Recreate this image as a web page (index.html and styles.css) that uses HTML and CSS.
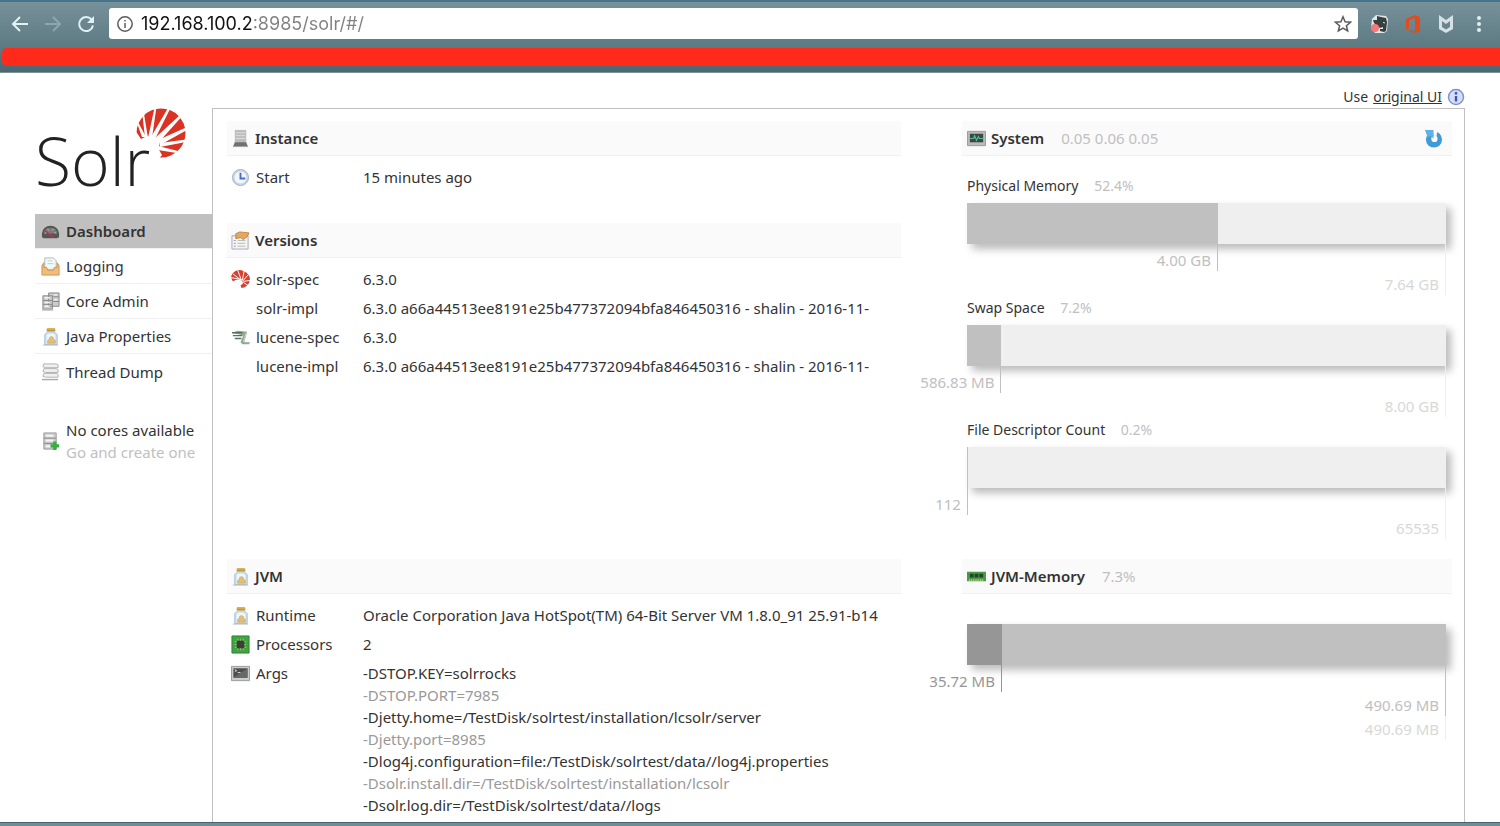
FILE: index.html
```html
<!DOCTYPE html>
<html lang="en">
<head>
  <meta charset="utf-8">
  <title>Solr Admin</title>
  <link rel="stylesheet" href="styles.css">
</head>
<body>
  <!-- Shared icons -->
  <svg class="defs" aria-hidden="true">
    <symbol id="icon-jar" viewBox="0 0 20 20">
      <path d="M4 8l3-3h7l3 3v10.500H4z" fill="#cfe3f0" stroke="#a3bccb"/>
      <path d="M6 9l2-2h5l2 2v8H6z" fill="#eef7fc"/>
      <rect x="6" y="1" width="9" height="4" rx="1" fill="#d9b25c"/>
      <path d="M6 3.500h9" stroke="#b98d35"/>
      <path d="M7 17v-3l2-1v-2l2-1 2 1v2l2 1v3z" fill="#e2c078" stroke="#c99c46" stroke-width=".6"/>
      <path d="M2 19h16" stroke="#bbb"/>
    </symbol>
    <symbol id="icon-sun" viewBox="0 0 50 50">
      <circle cx="25" cy="25" r="24.500" fill="#da3323"/>
      <path fill="#fff" d="M-1 22L5 31 10 28.500 16 28 20 30 23 33.500 23.500 37 22.500 41 26 47 22 52H-2z"/>
      <g fill="#fff">
        <path d="M1 15h1.500L10 29H6z"/>
        <path d="M6.500 7L8 6l4 24H9z"/>
        <path d="M18.500 0h1.800L16 30h-4z"/>
        <path d="M32 0l2 1-15 30-4-2z"/>
        <path d="M43 8l1.500 2L23 34l-4-4z"/>
        <path d="M49 20l1 2.500L24 37l-2-5z"/>
        <path d="M50 31.500v2.500L24 39v-4z"/>
        <path d="M42 43l-1.500 2L22 42v-4z"/>
      </g>
    </symbol>
  </svg>

  <header class="toolbar">
    <div class="nav-row">
      <button class="nav-btn" aria-label="Back">
        <svg viewBox="0 0 20 20"><path d="M18 10H3M10 3l-7 7 7 7"/></svg>
      </button>
      <button class="nav-btn disabled" aria-label="Forward" disabled>
        <svg viewBox="0 0 20 20"><path d="M2 10h15M10 3l7 7-7 7"/></svg>
      </button>
      <button class="nav-btn" aria-label="Reload">
        <svg viewBox="0 0 20 20"><path d="M15.500 5.500a7 7 0 1 0 1.500 6"/><path d="M18 2v7h-7z" class="solid"/></svg>
      </button>
      <div class="omnibox">
        <svg class="site-info" viewBox="0 0 18 18"><circle cx="9" cy="9" r="7.200"/><path d="M9 8v5M9 5v1.600"/></svg>
        <input class="url" type="text" value="192.168.100.2:8985/solr/#/" aria-label="Address">
        <svg class="star" viewBox="0 0 18 18"><path d="M9 1.800l2.100 5 5.400.4-4.100 3.500 1.300 5.300L9 13.200 4.300 16l1.300-5.300L1.500 7.200l5.400-.4z"/></svg>
      </div>
      <div class="extensions">
        <svg viewBox="0 0 20 20">
          <path d="M2 5l4-4 10 1 2 3-1 12-3 2H5L1 14z" fill="#dfe7e8"/>
          <path d="M3 6h4V2l4 1 5 1 1 4-1 9-2 1-4-1v-2h3v-2l-3 1-3-2-3-3z" fill="#36403f"/>
          <path d="M13 8.500l2 .5" stroke="#dfe7e8"/>
          <circle cx="5" cy="14" r="4" fill="#f5787a"/>
        </svg>
        <svg viewBox="0 0 20 20"><path d="M3 5l9-4 5 2v14l-5 2-9-3 9 1V4L6 6v8l-3 2z" fill="#e64a19"/></svg>
        <svg viewBox="0 0 20 20"><path d="M3 1l7 5 7-5v14l-7 4-7-4zM6 7v6l4 2.500 4-2.500V7l-4 3z" fill="#d7e1e5" fill-rule="evenodd"/></svg>
        <svg viewBox="0 0 20 20"><g fill="#e3eef0"><circle cx="10" cy="4" r="2"/><circle cx="10" cy="10" r="2"/><circle cx="10" cy="16" r="2"/></g></svg>
      </div>
    </div>
    <div class="bookmarks"></div>
  </header>

  <main class="page">
    <p class="switch-ui">Use <a href="#">original UI</a>
      <svg viewBox="0 0 18 18"><circle cx="9" cy="9" r="7.500" fill="#d5dffa" stroke="#8193cf" stroke-width="1.500"/><path d="M9 8v5.500M9 4v2.400" stroke="#3a56b5" stroke-width="2.400"/></svg>
    </p>

    <div class="wrapper">
      <aside class="sidebar">
        <a href="#" class="logo" aria-label="Apache Solr">
          <span class="logo-text">Solr</span>
          <svg class="logo-sun"><use href="#icon-sun"/></svg>
        </a>

        <nav class="menu">
          <a href="#" class="active">
            <svg class="icon" viewBox="0 0 20 20"><path d="M1 16V12a9 8 0 0 1 18 0v4l-2 1H3z" fill="#555"/><path d="M3 12a7 6 0 0 1 14 0z" fill="#7b7b7b"/><path d="M4 12l2-1M7 7l1 2M13 7l-1 2M16 12l-2-1" stroke="#bbb"/><path d="M4 9l9 7" stroke="#b33a50" stroke-width="1.600"/></svg>
            Dashboard
          </a>
          <a href="#">
            <svg class="icon" viewBox="0 0 20 20"><path d="M4 1h9l3 3v9H4z" fill="#f3f8f8" stroke="#a9b9b9"/><path d="M7 4h5M7 7h6" stroke="#b9cccc"/><path d="M1 9l2-3v5h3l1 3h6l1-3h3V6l2 3v10H1z" fill="#f1bd7c" stroke="#cf9250"/></svg>
            Logging
          </a>
          <a href="#">
            <svg class="icon" viewBox="0 0 20 20"><g stroke="#888" fill="#ccc"><path d="M8 1h11v14H8zM2 4h10v14H2z"/><path d="M2 9h10M2 13h10M13 5h6M13 10h6"/></g><path d="M4 6h5M4 11h5M4 15h5M14 3h3M14 8h3" stroke="#f5f5f5" stroke-width="1.500"/><path d="M1 19h12" stroke="#aaa"/></svg>
            Core Admin
          </a>
          <a href="#">
            <svg class="icon"><use href="#icon-jar"/></svg>
            Java Properties
          </a>
          <a href="#">
            <svg class="icon" viewBox="0 0 20 20"><path d="M3 2h13l2 1v3H5L2 5zM3 7h13l2 1v3H5l-3-1zM3 12h13l2 1v3H5l-3-1z" fill="#f0f0f0" stroke="#b0b0b0"/><path d="M1 18.500h17" stroke="#aaa" stroke-width="1.500"/></svg>
            Thread Dump
          </a>
        </nav>

        <div class="no-cores">
          <svg class="icon" viewBox="0 0 20 20"><path d="M3 1h13v17H3z" fill="#ccc" stroke="#999"/><path d="M3 6.500h13M3 12h13" stroke="#888"/><path d="M5 4h8M5 9h8M5 15h6" stroke="#f4f4f4" stroke-width="2"/><path d="M14.500 10v9M10 14.500h9" stroke="#33b13a" stroke-width="3.400"/></svg>
          <p>No cores available<br><a href="#">Go and create one</a></p>
        </div>
      </aside>

      <div class="content">
        <div class="column">
          <section class="instance">
            <h2><svg class="icon" viewBox="0 0 20 20"><path d="M4 1h12v14H4z" fill="#bdbdbd"/><path d="M5 4h10M5 7h10M5 10h10" stroke="#dedede"/><path d="M4 14h12l2 5H2z" fill="#707070"/><path d="M2 18.500h16" stroke="#aaa"/></svg>Instance</h2>
            <dl>
              <div class="row">
                <dt><svg class="icon" viewBox="0 0 20 20"><circle cx="10" cy="10" r="8.500" fill="#c8d4e8" stroke="#a4b1c3"/><circle cx="10" cy="10" r="6.300" fill="#f2f6fc"/><path d="M10 5v6h5" fill="none" stroke="#4b6cc0" stroke-width="2"/></svg>Start</dt>
                <dd>15 minutes ago</dd>
              </div>
            </dl>
          </section>

          <section class="versions">
            <h2><svg class="icon" viewBox="0 0 20 20"><path d="M1 5h17v14H1z" fill="#f3f3f3" stroke="#aaa"/><path d="M3 10h2M3 13h2M3 16h2" stroke="#8b9cd0"/><path d="M7 10h8M7 13h8M7 16h8" stroke="#bbb"/><path d="M5 3l4-2 10 1-2 4-4 3-3-2-5 1z" fill="#e0a860" stroke="#c48740"/></svg>Versions</h2>
            <dl>
              <div class="row">
                <dt><svg class="icon" viewBox="0 0 20 20"><path d="M0 8a9 9 0 0 1 13-7q7 3 7 9-1 8-9 9l-1-3q4-1 2-4Q8 8 2 12z" fill="#d9402f"/><path d="M11 11L2 4M11 11L7 0M12 11l2-11M12 12l7-8M13 12l7-1M13 13l6 4M11 10L0 8" stroke="#fff"/></svg>solr-spec</dt>
                <dd>6.3.0</dd>
              </div>
              <div class="row">
                <dt>solr-impl</dt>
                <dd>6.3.0 a66a44513ee8191e25b477372094bfa846450316 - shalin - 2016-11-</dd>
              </div>
              <div class="row">
                <dt><svg class="icon" viewBox="0 0 20 20"><path d="M1 5l6-2 10 1-3 11h6l-1 2h-7l-2-2 3-7z" fill="#8fa892"/><path d="M1 5h11M2 8h10M4 11h7" stroke="#59705c" stroke-width="1.500"/><path d="M16 5l-3 10" stroke="#cfdccf"/></svg>lucene-spec</dt>
                <dd>6.3.0</dd>
              </div>
              <div class="row">
                <dt>lucene-impl</dt>
                <dd>6.3.0 a66a44513ee8191e25b477372094bfa846450316 - shalin - 2016-11-</dd>
              </div>
            </dl>
          </section>
        </div>

        <section class="system">
          <h2><svg class="icon" viewBox="0 0 20 20"><path d="M.500 2.500h19v15H.500z" fill="#bbb" stroke="#999"/><path d="M3 5h14v9H3z" fill="#444"/><path d="M3 10h4l1-3 2 5 2-4 1 2h4" fill="none" stroke="#43c59a" stroke-width="1.200"/></svg>System <span>0.05 0.06 0.05</span>
            <button class="reload" aria-label="Reload">
              <svg viewBox="0 0 20 20"><circle cx="10.500" cy="11" r="8.500" fill="#3f9bd8"/><circle cx="11" cy="10.500" r="3.300" fill="#fafafa"/><path d="M9 0l5 1-1 8-3-2z" fill="#fafafa"/><path d="M1 1h9v9L6.500 7 4 9z" fill="#5fb0e4"/></svg>
            </button>
          </h2>
          <div class="meter">
            <h3>Physical Memory <span>52.4%</span></h3>
            <div class="bar">
              <div class="bar-value" style="width: 52.4%"><span>4.00 GB</span></div>
              <span class="bar-max">7.64 GB</span>
            </div>
          </div>
          <div class="meter">
            <h3>Swap Space <span>7.2%</span></h3>
            <div class="bar">
              <div class="bar-value" style="width: 7.2%"><span>586.83 MB</span></div>
              <span class="bar-max">8.00 GB</span>
            </div>
          </div>
          <div class="meter">
            <h3>File Descriptor Count <span>0.2%</span></h3>
            <div class="bar">
              <div class="bar-value" style="width: 0.2%"><span>112</span></div>
              <span class="bar-max">65535</span>
            </div>
          </div>
        </section>

        <section class="jvm">
          <h2><svg class="icon"><use href="#icon-jar"/></svg>JVM</h2>
          <dl>
            <div class="row">
              <dt><svg class="icon"><use href="#icon-jar"/></svg>Runtime</dt>
              <dd>Oracle Corporation Java HotSpot(TM) 64-Bit Server VM 1.8.0_91 25.91-b14</dd>
            </div>
            <div class="row">
              <dt><svg class="icon" viewBox="0 0 20 20"><path d="M1 1h18v18H1z" fill="#3fa63f" stroke="#2d8330"/><path d="M4 7h12M4 10h12M4 13h12M7 4v12M10 4v12M13 4v12" stroke="#b4b878"/><path d="M6 6h8v8H6z" fill="#3a3f3a"/></svg>Processors</dt>
              <dd>2</dd>
            </div>
            <div class="row">
              <dt><svg class="icon" viewBox="0 0 20 20"><path d="M.500 2.500h19v15H.500z" fill="#ccc" stroke="#999"/><path d="M2.500 4.500h15v10h-15z" fill="#4b4d50"/><path d="M3 14L17 5v9z" fill="#66686b"/><path d="M4 6l2 1-2 1M7 9h3" fill="none" stroke="#ddd"/></svg>Args</dt>
              <dd>
                <ul class="args">
                  <li>-DSTOP.KEY=solrrocks</li>
                  <li>-DSTOP.PORT=7985</li>
                  <li>-Djetty.home=/TestDisk/solrtest/installation/lcsolr/server</li>
                  <li>-Djetty.port=8985</li>
                  <li>-Dlog4j.configuration=file:/TestDisk/solrtest/data//log4j.properties</li>
                  <li>-Dsolr.install.dir=/TestDisk/solrtest/installation/lcsolr</li>
                  <li>-Dsolr.log.dir=/TestDisk/solrtest/data//logs</li>
                </ul>
              </dd>
            </div>
          </dl>
        </section>

        <section class="jvm-memory">
          <h2><svg class="icon" viewBox="0 0 20 20"><path d="M0 5h20v10H0z" fill="#479a47"/><path d="M3 7h4v4H3zM8 7h4v4H8zM13 7h4v4h-4z" fill="#244424"/><path d="M2 14h16" stroke="#cfd48a" stroke-dasharray="1 1" stroke-width="2"/></svg>JVM-Memory <span>7.3%</span></h2>
          <div class="bar bar-total">
            <div class="bar-value" style="width: 7.3%"><span>35.72 MB</span></div>
            <span class="bar-committed">490.69 MB</span>
            <span class="bar-max">490.69 MB</span>
          </div>
        </section>
      </div>
    </div>
  </main>
  <div class="window-edge"></div>
</body>
</html>
```
FILE: styles.css
```css
:root {
  --text: #333;
  --muted: #c0c0c0;
  --faint: #d8d8d8;
  --border: #c0c0c0;
}

* {
  box-sizing: border-box;
}

body {
  display: flex;
  flex-direction: column;
  height: 100vh;
  margin: 0;
  overflow: hidden;
  background: #fff;
  color: var(--text);
  font-family: "Noto Sans", "Lucida Grande", sans-serif;
  font-size: 15px;
  line-height: 22px;
}

h2, h3, p, dl, dd, ul {
  margin: 0;
  padding: 0;
}

button {
  padding: 0;
  border: none;
  background: none;
}

.defs {
  position: absolute;
  width: 0;
  height: 0;
}

.icon {
  flex-shrink: 0;
  width: 19px;
  height: 19px;
}

/* Browser chrome */
.toolbar {
  flex-shrink: 0;
  padding-top: 6px;
  border-top: 2px solid #477489;
  border-bottom: 1px solid #7f9298;
  background: linear-gradient(#76919a, #5f7b84 60%, #4a6872);
}

.nav-row {
  display: flex;
  align-items: center;
  padding: 0 11px 0 10px;
}

.nav-btn {
  width: 20px;
  height: 20px;
  margin-right: 13px;
}

.nav-btn svg {
  display: block;
  fill: none;
  stroke: #e4f1f3;
  stroke-width: 2;
}

.nav-btn .solid {
  fill: #e4f1f3;
  stroke: none;
}

.nav-btn.disabled {
  opacity: 0.3;
}

.omnibox {
  display: flex;
  flex: 1;
  align-items: center;
  height: 31px;
  padding: 0 6px 0 7px;
  border-radius: 3px;
  background: #fff;
}

.site-info,
.star {
  width: 18px;
  height: 18px;
  fill: none;
  stroke: #5c5c5c;
  stroke-width: 1.5;
}

/* host is black, the rest of the address grey */
.url {
  flex: 1;
  min-width: 0;
  margin-left: 7px;
  padding: 0;
  border: none;
  outline: none;
  background: linear-gradient(to right, #111 112px, #808080 112px);
  background-clip: text;
  -webkit-background-clip: text;
  color: transparent;
  font-family: Inter, sans-serif;
  font-size: 18px;
}

.extensions {
  display: flex;
  gap: 13px;
  margin-left: 12px;
}

.extensions svg {
  width: 20px;
  height: 20px;
}

.bookmarks {
  height: 18px;
  margin: 9px 0 6px 2px;
  border-radius: 5px 0 0 5px;
  background: #ff2a1a;
}

/* Page */
.page {
  display: flex;
  flex: 1;
  flex-direction: column;
  min-height: 0;
  padding: 13px 35px 0;
  overflow: hidden;
}

.switch-ui {
  display: flex;
  justify-content: flex-end;
  align-items: center;
  gap: 5px;
  font-size: 14px;
}

.switch-ui a {
  color: var(--text);
}

.switch-ui svg {
  width: 18px;
  height: 18px;
}

.wrapper {
  display: flex;
  flex: 1;
}

.sidebar {
  width: 177px;
}

.logo {
  display: flex;
  align-items: flex-start;
  height: 106px;
  color: #222;
  text-decoration: none;
}

/* the r reaches under the sun */
.logo-text {
  z-index: 1;
  width: 101px;
  padding-top: 12px;
  font-family: "Open Sans", sans-serif;
  font-size: 66px;
  font-weight: 300;
  line-height: 80px;
}

.logo-sun {
  width: 50px;
  height: 50px;
}

.menu a {
  display: flex;
  align-items: center;
  gap: 6px;
  height: 35px;
  padding-left: 6px;
  border-bottom: 1px solid #f0f0f0;
  color: var(--text);
  text-decoration: none;
}

.menu a:last-child {
  border-bottom: none;
}

.menu .active {
  background: var(--muted);
  font-weight: 600;
}

.no-cores {
  display: flex;
  align-items: center;
  gap: 6px;
  margin-top: 30px;
  padding-left: 6px;
  white-space: nowrap;
}

.no-cores a {
  color: var(--muted);
  text-decoration: none;
}

.content {
  display: grid;
  flex: 1;
  grid-template-columns: 55% 40%;
  grid-template-rows: 438px auto;
  justify-content: space-between;
  padding: 12px 12px 0 14px;
  border: 1px solid var(--border);
  border-bottom: none;
}

/* Section headings */
h2 {
  display: flex;
  align-items: center;
  gap: 5px;
  height: 35px;
  padding-left: 4px;
  border-bottom: 1px solid #f0f0f0;
  background: #fafafa;
  font-size: 15px;
  font-weight: 600;
}

h2 span,
h3 span {
  margin-left: 12px;
  color: var(--muted);
  font-weight: 400;
}

.system h2,
.jvm-memory h2 {
  padding-left: 5px;
}

.reload {
  width: 19px;
  height: 19px;
  margin: 0 9px 0 auto;
}

.reload svg {
  display: block;
}

/* Property lists */
dl {
  display: flex;
  flex-direction: column;
  gap: 7px;
  padding: 10px 0 0 4px;
}

.instance {
  height: 102px;
}

.row {
  display: flex;
}

dt {
  display: flex;
  flex-shrink: 0;
  align-items: center;
  gap: 6px;
  width: 132px;
  height: 22px;
}

dt:not(:has(svg)) {
  padding-left: 25px;
}

dd {
  white-space: nowrap;
}

.args {
  list-style: none;
}

.args li:nth-child(even) {
  color: #999;
}

/* Memory meters */
.meter {
  margin: 0 6px 53px 5px;
}

h2 + .meter {
  margin-top: 19px;
}

h3 {
  margin-bottom: 6px;
  font-size: 14px;
  font-weight: 400;
}

.bar {
  position: relative;
  height: 41px;
  background: #efefef;
  box-shadow: 5px 5px 8px #bbb;
}

.bar-total {
  margin: 30px 6px 0 5px;
  background: #c0c0c0;
}

.bar-value {
  position: relative;
  height: 100%;
  background: #c0c0c0;
}

.bar-total .bar-value {
  background: #969696;
}

/* captions hang below the bar, right-aligned to their tick line */
.bar span {
  position: absolute;
  top: 100%;
  right: 0;
  padding: 5px 6px 0 0;
  border-right: 1px solid var(--muted);
  color: var(--muted);
  white-space: nowrap;
}

.bar .bar-max {
  padding-top: 29px;
  border-color: #eee;
  color: var(--faint);
}

.bar-total .bar-value span {
  border-color: #969696;
  color: #969696;
}

.bar .bar-committed {
  padding-top: 29px;
}

.bar-total .bar-max {
  padding-top: 53px;
}

.bar-total .bar-committed {
  z-index: 1;
}

.window-edge {
  flex-shrink: 0;
  height: 4px;
  border-top: 1px solid #48656f;
  background: #708c95;
}
```
